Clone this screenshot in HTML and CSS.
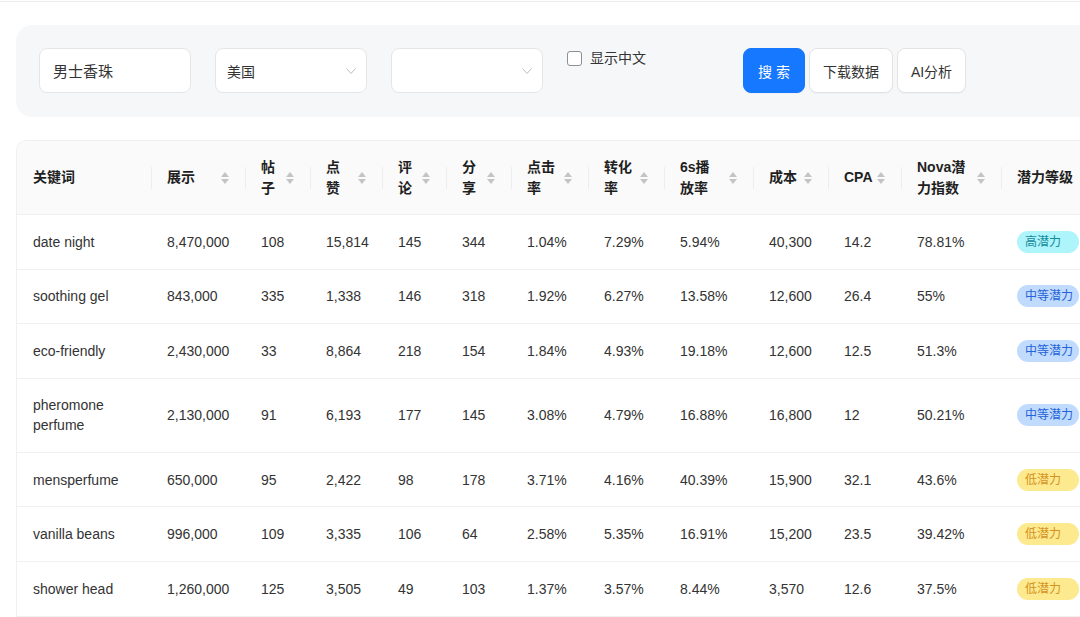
FILE: index.html
```html
<!DOCTYPE html>
<html lang="zh">
<head>
<meta charset="utf-8">
<title>关键词潜力</title>
<link rel="stylesheet" href="styles.css">
</head>
<body>
<div class="topbar"></div>
<div class="page">
  <div class="filters">
    <div class="field input">男士香珠</div>
    <div class="field select"><span class="val">美国</span><svg class="chev" width="10" height="6" viewBox="0 0 10 6"><polyline points="0.5,0.5 5,5.5 9.5,0.5" fill="none" stroke="#bfbfbf" stroke-width="1"/></svg></div>
    <div class="field select"><span class="val"></span><svg class="chev" width="10" height="6" viewBox="0 0 10 6"><polyline points="0.5,0.5 5,5.5 9.5,0.5" fill="none" stroke="#bfbfbf" stroke-width="1"/></svg></div>
    <label class="check"><span class="box"></span><span>显示中文</span></label>
    <div class="btns">
      <button class="btn primary">搜 索</button>
      <button class="btn">下载数据</button>
      <button class="btn">AI分析</button>
    </div>
  </div>

  <div class="tablewrap">
    <table class="grid">
      <colgroup>
        <col style="width:134px"><col style="width:94px"><col style="width:65px"><col style="width:72px"><col style="width:64px"><col style="width:65px"><col style="width:77px"><col style="width:76px"><col style="width:89px"><col style="width:75px"><col style="width:73px"><col style="width:100px"><col style="width:120px">
      </colgroup>
      <thead>
        <tr>
          <th class="first">关键词</th>
          <th><div class="th-in"><span class="tt">展示</span><span class="sort"><i class="up"></i><i class="down"></i></span></div></th>
          <th><div class="th-in"><span class="tt">帖<br>子</span><span class="sort"><i class="up"></i><i class="down"></i></span></div></th>
          <th><div class="th-in"><span class="tt">点<br>赞</span><span class="sort"><i class="up"></i><i class="down"></i></span></div></th>
          <th><div class="th-in"><span class="tt">评<br>论</span><span class="sort"><i class="up"></i><i class="down"></i></span></div></th>
          <th><div class="th-in"><span class="tt">分<br>享</span><span class="sort"><i class="up"></i><i class="down"></i></span></div></th>
          <th><div class="th-in"><span class="tt">点击<br>率</span><span class="sort"><i class="up"></i><i class="down"></i></span></div></th>
          <th><div class="th-in"><span class="tt">转化<br>率</span><span class="sort"><i class="up"></i><i class="down"></i></span></div></th>
          <th><div class="th-in"><span class="tt">6s播<br>放率</span><span class="sort"><i class="up"></i><i class="down"></i></span></div></th>
          <th><div class="th-in"><span class="tt">成本</span><span class="sort"><i class="up"></i><i class="down"></i></span></div></th>
          <th><div class="th-in"><span class="tt">CPA</span><span class="sort"><i class="up"></i><i class="down"></i></span></div></th>
          <th><div class="th-in"><span class="tt">Nova潜<br>力指数</span><span class="sort"><i class="up"></i><i class="down"></i></span></div></th>
          <th>潜力等级</th>
        </tr>
      </thead>
      <tbody>
        <tr><td>date night</td><td>8,470,000</td><td>108</td><td>15,814</td><td>145</td><td>344</td><td>1.04%</td><td>7.29%</td><td>5.94%</td><td>40,300</td><td>14.2</td><td>78.81%</td><td><span class="tag high">高潜力</span></td></tr>
        <tr><td>soothing gel</td><td>843,000</td><td>335</td><td>1,338</td><td>146</td><td>318</td><td>1.92%</td><td>6.27%</td><td>13.58%</td><td>12,600</td><td>26.4</td><td>55%</td><td><span class="tag mid">中等潜力</span></td></tr>
        <tr><td>eco-friendly</td><td>2,430,000</td><td>33</td><td>8,864</td><td>218</td><td>154</td><td>1.84%</td><td>4.93%</td><td>19.18%</td><td>12,600</td><td>12.5</td><td>51.3%</td><td><span class="tag mid">中等潜力</span></td></tr>
        <tr><td>pheromone perfume</td><td>2,130,000</td><td>91</td><td>6,193</td><td>177</td><td>145</td><td>3.08%</td><td>4.79%</td><td>16.88%</td><td>16,800</td><td>12</td><td>50.21%</td><td><span class="tag mid">中等潜力</span></td></tr>
        <tr><td>mensperfume</td><td>650,000</td><td>95</td><td>2,422</td><td>98</td><td>178</td><td>3.71%</td><td>4.16%</td><td>40.39%</td><td>15,900</td><td>32.1</td><td>43.6%</td><td><span class="tag low">低潜力</span></td></tr>
        <tr><td>vanilla beans</td><td>996,000</td><td>109</td><td>3,335</td><td>106</td><td>64</td><td>2.58%</td><td>5.35%</td><td>16.91%</td><td>15,200</td><td>23.5</td><td>39.42%</td><td><span class="tag low">低潜力</span></td></tr>
        <tr><td>shower head</td><td>1,260,000</td><td>125</td><td>3,505</td><td>49</td><td>103</td><td>1.37%</td><td>3.57%</td><td>8.44%</td><td>3,570</td><td>12.6</td><td>37.5%</td><td><span class="tag low">低潜力</span></td></tr>
      </tbody>
    </table>
  </div>
</div>
</body>
</html>
```
FILE: styles.css
```css
* { box-sizing: border-box; }
html, body { margin: 0; padding: 0; }
body {
  background: #fff;
  font-family: "Liberation Sans", "Noto Sans CJK SC", sans-serif;
  font-size: 14px;
  color: #333;
  overflow: hidden;
  width: 1080px;
  height: 617px;
}
.topbar {
  height: 2px;
  border-bottom: 1px solid #ececec;
}
.page {
  width: 1160px;
  padding: 23px 0 0 16px;
}
.filters {
  display: flex;
  align-items: flex-start;
  gap: 24px;
  background: #f6f7f9;
  border-radius: 16px;
  padding: 23px 23px 24px 23px;
}
.field {
  width: 152px;
  height: 45px;
  background: #fff;
  border: 1px solid #e6e6e6;
  border-radius: 8px;
  display: flex;
  align-items: center;
}
.input {
  padding-left: 13px;
  font-size: 15px;
  color: #333;
}
.select {
  padding: 0 10px 0 11px;
  justify-content: space-between;
  color: #333;
}
.select .val { font-size: 14px; }
.chev { display: block; margin-top: 1px; }
.check {
  width: 152px;
  display: flex;
  align-items: center;
  gap: 8px;
  line-height: 20px;
  color: #333;
}
.box {
  width: 15px;
  height: 15px;
  border: 1px solid #8f8f8f;
  border-radius: 3px;
  background: #fff;
  margin-top: 1px;
}
.btns {
  display: flex;
  gap: 4px;
}
.btn {
  height: 45px;
  padding: 0 13px;
  border: 1px solid #e3e3e3;
  border-radius: 8px;
  background: #fff;
  font-family: inherit;
  font-size: 14px;
  color: #333;
  box-shadow: 0 1px 1px rgba(0,0,0,0.03);
}
.btn.primary {
  background: #1677ff;
  border-color: #1677ff;
  color: #fff;
  padding: 0 14px;
}
.tablewrap {
  margin-top: 23px;
  border: 1px solid #f0f0f0;
  border-bottom: none;
  border-radius: 10px 10px 0 0;
  overflow: hidden;
  width: 1144px;
}
.grid {
  border-collapse: collapse;
  table-layout: fixed;
  width: 1104px;
}
.grid th {
  position: relative;
  background: #fafafa;
  text-align: left;
  font-weight: 600;
  color: #1f1f1f;
  padding: 16px;
  line-height: 20.5px;
  border-bottom: 1px solid #f0f0f0;
  vertical-align: middle;
}
.grid th + th::before {
  content: "";
  position: absolute;
  left: 0;
  top: 50%;
  width: 1px;
  height: 22px;
  margin-top: -11px;
  background: #ededed;
}
.th-in {
  display: flex;
  align-items: center;
  gap: 4px;
}
.tt { flex: 1; }
.sort {
  display: flex;
  flex-direction: column;
  align-items: center;
  gap: 2px;
  width: 8px;
}
.sort i {
  display: block;
  width: 0;
  height: 0;
  border-left: 4px solid transparent;
  border-right: 4px solid transparent;
}
.sort .up { border-bottom: 5px solid #c4c4c4; }
.sort .down { border-top: 5px solid #c4c4c4; }
.grid td {
  height: 54.6px;
  padding: 0 16px;
  line-height: 20px;
  border-bottom: 1px solid #f0f0f0;
  color: #333;
  vertical-align: middle;
}
.grid td:first-child { padding-top: 16.5px; padding-bottom: 16.5px; }
.tag {
  display: block;
  width: 62px;
  height: 22px;
  line-height: 22px;
  padding-left: 8px;
  border-radius: 11px;
  font-size: 12px;
  white-space: nowrap;
}
.tag.high { background: #aef4fb; color: #138a9c; }
.tag.mid { background: #c0dbfd; color: #2563d8; }
.tag.low { background: #fde98e; color: #d4921e; }
```
